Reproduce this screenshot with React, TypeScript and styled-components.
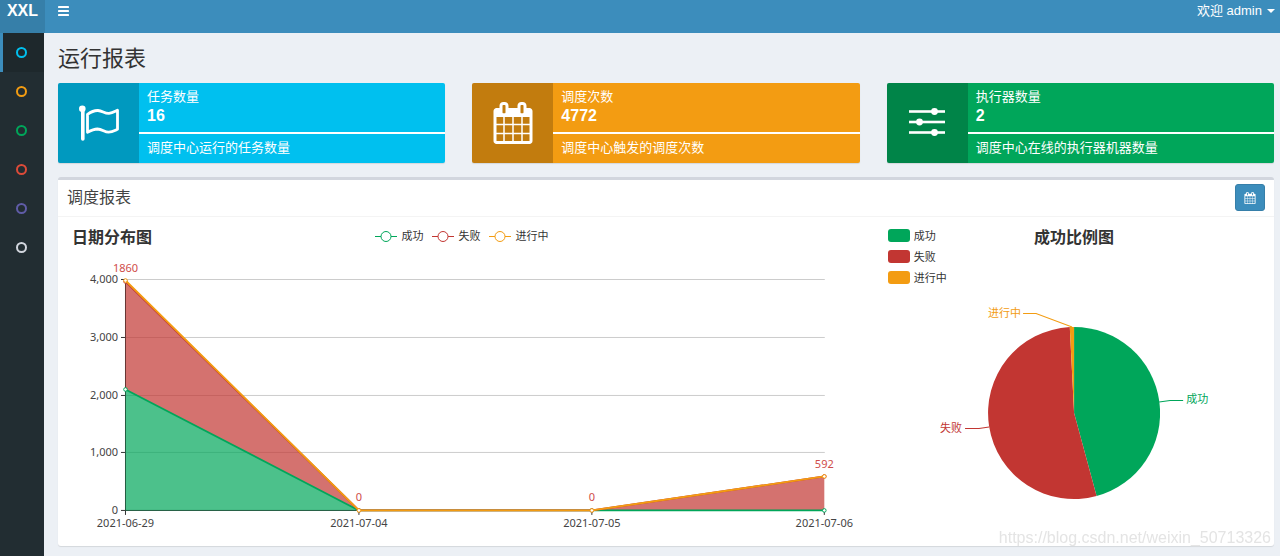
import React from "react";
import styled, { createGlobalStyle } from "styled-components";

const GREEN = "#00a65a";
const RED = "#c23632";
const ORANGE = "#f39c12";

const GlobalStyle = createGlobalStyle`
  *, *::before, *::after { box-sizing: border-box; }
  body {
    margin: 0;
    background: #ecf0f5;
    color: #333;
    font: 13px/18px "Liberation Sans", "Noto Sans CJK SC", sans-serif;
  }
  h1, h2, h3, p, ul { margin: 0; padding: 0; }
  button { font: inherit; cursor: pointer; }
`;

const Page = styled.div`
  display: flex;
  flex-direction: column;
  min-height: 100vh;
`;

const TopBar = styled.header`
  display: flex;
  height: 33px;
  background: #3c8dbc;
  color: #fff;
`;

const Logo = styled.a`
  width: 45px;
  background: #367fa9;
  color: #fff;
  font-size: 16px;
  font-weight: 700;
  line-height: 22px;
  text-align: center;
  text-decoration: none;
`;

const BarButton = styled.button`
  display: flex;
  align-items: center;
  height: 22px;
  padding: 0 13px;
  border: 0;
  background: none;
  color: #fff;
`;

const UserButton = styled(BarButton)`
  gap: 5px;
  margin-left: auto;
  padding: 0 5px;
`;

const Caret = styled.span`
  border: 4px solid transparent;
  border-top-color: #fff;
  border-bottom: 0;
`;

const Body = styled.div`
  display: flex;
  flex: 1;
`;

const Sidebar = styled.nav`
  flex: none;
  width: 44px;
  margin-right: 1px;
  background: #222d32;
`;

const MenuList = styled.ul`
  list-style: none;
`;

const MenuLink = styled.a<{ $active?: boolean }>`
  display: flex;
  align-items: center;
  height: 39px;
  padding-left: 13px;
  border-left: 3px solid ${(p) => (p.$active ? "#3c8dbc" : "transparent")};
  background: ${(p) => (p.$active ? "#1e282c" : "transparent")};
`;

const Ring = styled.span<{ $color: string }>`
  width: 11px;
  height: 11px;
  border: 2px solid ${(p) => p.$color};
  border-radius: 50%;
`;

const Main = styled.main`
  flex: 1;
  min-width: 0;
  padding: 13px 6px 9px 13px;
`;

const PageTitle = styled.h1`
  margin-bottom: 11px;
  font-size: 22px;
  font-weight: 400;
  line-height: 26px;
`;

const Cards = styled.div`
  display: grid;
  grid-template-columns: repeat(3, 1fr);
  gap: 27px;
  margin-bottom: 14px;
`;

const Card = styled.section<{ $color: string }>`
  display: flex;
  height: 80px;
  overflow: hidden;
  border-radius: 2px;
  background: ${(p) => p.$color};
  box-shadow: 0 1px 1px rgba(0, 0, 0, 0.1);
  color: #fff;
`;

const CardIcon = styled.div`
  display: flex;
  flex: none;
  align-items: center;
  justify-content: center;
  width: 81px;
  background: rgba(0, 0, 0, 0.2);
`;

const CardContent = styled.div`
  flex: 1;
  padding-top: 5px;
`;

const CardText = styled.p`
  padding: 0 8px;
  white-space: nowrap;
`;

const CardNumber = styled.p`
  padding: 0 8px;
  font-size: 16px;
  font-weight: 700;
  line-height: 20px;
`;

const CardRule = styled.div`
  height: 2px;
  margin: 6px 0 5px;
  background: #fff;
`;

const Box = styled.section`
  border-top: 3px solid #d2d6de;
  border-radius: 3px;
  background: #fff;
  box-shadow: 0 1px 1px rgba(0, 0, 0, 0.1);
`;

const BoxHeader = styled.div`
  display: flex;
  align-items: flex-start;
  justify-content: space-between;
  height: 37px;
  padding: 4px 9px 0;
  border-bottom: 1px solid #f4f4f4;
`;

const BoxTitle = styled.h2`
  color: #444;
  font-size: 16px;
  font-weight: 400;
  line-height: 27px;
`;

const DateButton = styled.button`
  display: flex;
  align-items: center;
  justify-content: center;
  width: 30px;
  height: 27px;
  padding: 0;
  border: 1px solid #367fa9;
  border-radius: 3px;
  background: #3c8dbc;
  color: #fff;
`;

const Charts = styled.div`
  display: grid;
  grid-template-columns: 31fr 15fr;
  gap: 26px;
  padding: 0 9px;
  font-family: "Noto Sans", "Noto Sans CJK SC", sans-serif;
`;

const ChartHead = styled.div<{ $height: number }>`
  display: grid;
  grid-template-columns: 1fr auto 1fr;
  align-items: start;
  height: ${(p) => p.$height}px;
  padding: 10px 5px 0;
`;

const ChartTitle = styled.h3`
  font-size: 16px;
  font-weight: 700;
  line-height: 20px;
`;

const Legend = styled.ul<{ $vertical?: boolean }>`
  display: flex;
  flex-direction: ${(p) => (p.$vertical ? "column" : "row")};
  gap: ${(p) => (p.$vertical ? "4px" : "9px")};
  list-style: none;
`;

const LegendItem = styled.li`
  display: flex;
  align-items: center;
  gap: 4px;
  font-size: 11px;
  line-height: 17px;
  white-space: nowrap;
`;

const Swatch = styled.span<{ $color: string }>`
  width: 22px;
  height: 13px;
  border-radius: 3px;
  background: ${(p) => p.$color};
`;

const Drawing = styled.svg`
  display: block;
  width: 100%;
  height: auto;
  font-size: 11px;
`;

const Watermark = styled.div`
  position: fixed;
  right: 9px;
  bottom: 9px;
  color: #e4e4e4;
  font-size: 16px;
`;

const BarsIcon = () => (
  <svg width="11" height="10" viewBox="0 0 11 10" fill="currentColor">
    <rect width="11" height="2" rx=".4" />
    <rect y="4" width="11" height="2" rx=".4" />
    <rect y="8" width="11" height="2" rx=".4" />
  </svg>
);

const CalendarIcon = ({ size }: { size: number }) => (
  <svg width={size} height={size} viewBox="0 0 1792 1792" fill="currentColor">
    <path d="M192 1664h288v-288h-288v288zm352 0h320v-288h-320v288zm-352-352h288v-320h-288v320zm352 0h320v-320h-320v320zm-352-384h288v-288h-288v288zm736 736h320v-288h-320v288zm-384-736h320v-288h-320v288zm768 736h288v-288h-288v288zm-384-352h320v-320h-320v320zm-352-864v-288q0-13-9.5-22.5t-22.5-9.5h-64q-13 0-22.5 9.5t-9.5 22.5v288q0 13 9.5 22.5t22.5 9.5h64q13 0 22.5-9.5t9.5-22.5zm736 864h288v-320h-288v320zm-384-384h320v-288h-320v288zm384 0h288v-288h-288v288zm32-480v-288q0-13-9.5-22.5t-22.5-9.5h-64q-13 0-22.5 9.5t-9.5 22.5v288q0 13 9.5 22.5t22.5 9.5h64q13 0 22.5-9.5t9.5-22.5zm384-64v1280q0 52-38 90t-90 38h-1408q-52 0-90-38t-38-90v-1280q0-52 38-90t90-38h128v-96q0-66 47-113t113-47h64q66 0 113 47t47 113v96h384v-96q0-66 47-113t113-47h64q66 0 113 47t47 113v96h128q52 0 90 38t38 90z" />
  </svg>
);

const FlagIcon = () => (
  <svg width="40" height="36" viewBox="0 0 40 36" fill="none" stroke="currentColor">
    <circle cx="3.3" cy="3.8" r="3.3" fill="currentColor" stroke="none" />
    <path d="M3.8 4v30" strokeWidth="3.600" strokeLinecap="round" />
    <path
      d="M8.500 9.300C12 6.800 15.500 5.300 19 5.500C23.500 5.800 25.500 8.600 30 8.400C33 8.200 35.500 6.700 38.500 5.300V24.300C35 25.900 32.500 27.300 29.500 27.200C25.500 27 23 24 18.500 24C15 24.100 11.500 25.700 8.500 27.300Z"
      strokeWidth="2.800"
      strokeLinejoin="round"
    />
  </svg>
);

const SlidersIcon = () => (
  <svg width="36" height="30" viewBox="0 0 36 30" fill="currentColor">
    {[
      [3.5, 25.5],
      [14, 10.5],
      [24.5, 25.5],
    ].map(([y, x]) => (
      <g key={y}>
        <rect y={y - 1.3} width="36" height="2.600" />
        <circle cx={x} cy={y} r="3.400" />
      </g>
    ))}
  </svg>
);

const LineMark = ({ color }: { color: string }) => (
  <svg width="22" height="12" viewBox="0 0 22 12" fill="none" stroke={color}>
    <path d="M0 6.500H22" />
    <circle cx="11" cy="6.500" r="5" fill="#fff" />
  </svg>
);

const menu = [
  { name: "运行报表", color: "#00c0ef" },
  { name: "任务管理", color: "#f39c12" },
  { name: "调度日志", color: "#00a65a" },
  { name: "执行器管理", color: "#dd4b39" },
  { name: "用户管理", color: "#605ca8" },
  { name: "使用教程", color: "#d2d6de" },
];

const cards = [
  { label: "任务数量", value: 16, note: "调度中心运行的任务数量", color: "#00c0ef", icon: <FlagIcon /> },
  { label: "调度次数", value: 4772, note: "调度中心触发的调度次数", color: "#f39c12", icon: <CalendarIcon size={42} /> },
  { label: "执行器数量", value: 2, note: "调度中心在线的执行器机器数量", color: "#00a65a", icon: <SlidersIcon /> },
];

const series = [
  { name: "成功", color: GREEN },
  { name: "失败", color: RED },
  { name: "进行中", color: ORANGE },
];

const X = [58.5, 292, 525, 757.5];
const days = ["2021-06-29", "2021-07-04", "2021-07-05", "2021-07-06"];
const ticks = [
  { y: 22.5, label: "4,000" },
  { y: 80.5, label: "3,000" },
  { y: 138.5, label: "2,000" },
  { y: 195.5, label: "1,000" },
  { y: 253.5, label: "0" },
];
const BASE = [253.5, 253.5, 253.5, 253.5];
const stacks = [
  { color: GREEN, top: [132.5, 253.5, 253.5, 253.5], floor: BASE },
  { color: RED, top: [24.5, 253.5, 253.5, 219.5], floor: [132.5, 253.5, 253.5, 253.5] },
  { color: ORANGE, top: [23.5, 253.5, 253.5, 219.5], floor: [24.5, 253.5, 253.5, 219.5] },
];
const redLabels = [
  { text: "1860", y: 15 },
  { text: "0", y: 244 },
  { text: "0", y: 244 },
  { text: "592", y: 211 },
];

const points = (ys: number[]) => ys.map((y, i) => `${X[i]},${y}`);

const TrendChart = () => (
  <Drawing viewBox="0 0 790 289" role="img" aria-label="日期分布图">
    {ticks.map((t) => (
      <g key={t.label}>
        <path d={`M58 ${t.y}H758`} stroke="#ccc" />
        <path d={`M54 ${t.y}H58`} stroke="#333" />
        <text x="51" y={t.y + 3.5} textAnchor="end" fill="#444">{t.label}</text>
      </g>
    ))}
    <path d="M58.5 22V254M58 253.500H758" stroke="#333" fill="none" />
    {days.map((d, i) => (
      <g key={d}>
        <path d={`M${X[i]} 254V258`} stroke="#333" />
        <text x={X[i]} y="270" textAnchor="middle" fill="#444">{d}</text>
      </g>
    ))}
    {stacks.map((s) => (
      <polygon
        key={s.color}
        points={[...points(s.top), ...points(s.floor).reverse()].join(" ")}
        fill={s.color}
        fillOpacity=".7"
      />
    ))}
    {stacks.map((s) => (
      <g key={s.color} stroke={s.color}>
        <polyline points={points(s.top).join(" ")} fill="none" strokeWidth="1.800" strokeLinejoin="bevel" />
        {s.top.map((y, i) => (
          <circle key={i} cx={X[i]} cy={y} r="1.800" fill="#fff" />
        ))}
      </g>
    ))}
    {redLabels.map((l, i) => (
      <text key={i} x={X[i]} y={l.y} textAnchor="middle" fill="#cf4d4a">{l.text}</text>
    ))}
  </Drawing>
);

const PieChart = () => (
  <Drawing viewBox="0 0 382 249" role="img" aria-label="成功比例图">
    <path d="M191 116V30A86 86 0 0 1 213.500 199Z" fill={GREEN} />
    <path d="M191 116L213.500 199A86 86 0 1 1 186.700 30.100Z" fill={RED} />
    <path d="M191 116L186.700 30.100A86 86 0 0 1 191 30Z" fill={ORANGE} />
    <g fill="none">
      <path d="M276 105L287 103.500H300" stroke={GREEN} />
      <path d="M106 130L96 131.500H82" stroke={RED} />
      <path d="M189 30L153 16.500H140" stroke={ORANGE} />
    </g>
    <text x="303" y="106" fill={GREEN}>成功</text>
    <text x="79" y="135" textAnchor="end" fill={RED}>失败</text>
    <text x="138" y="20" textAnchor="end" fill={ORANGE}>进行中</text>
  </Drawing>
);

export default function App() {
  return (
    <Page>
      <GlobalStyle />
      <TopBar>
        <Logo href="#">XXL</Logo>
        <BarButton aria-label="切换导航"><BarsIcon /></BarButton>
        <UserButton>欢迎 admin<Caret /></UserButton>
      </TopBar>
      <Body>
        <Sidebar>
          <MenuList>
            {menu.map((m, i) => (
              <li key={m.name}>
                <MenuLink href="#" aria-label={m.name} $active={i === 0}>
                  <Ring $color={m.color} />
                </MenuLink>
              </li>
            ))}
          </MenuList>
        </Sidebar>
        <Main>
          <PageTitle>运行报表</PageTitle>
          <Cards>
            {cards.map((c) => (
              <Card key={c.label} $color={c.color}>
                <CardIcon>{c.icon}</CardIcon>
                <CardContent>
                  <CardText>{c.label}</CardText>
                  <CardNumber>{c.value}</CardNumber>
                  <CardRule />
                  <CardText>{c.note}</CardText>
                </CardContent>
              </Card>
            ))}
          </Cards>
          <Box>
            <BoxHeader>
              <BoxTitle>调度报表</BoxTitle>
              <DateButton aria-label="选择日期"><CalendarIcon size={12} /></DateButton>
            </BoxHeader>
            <Charts>
              <div>
                <ChartHead $height={40}>
                  <ChartTitle>日期分布图</ChartTitle>
                  <Legend>
                    {series.map((s) => (
                      <LegendItem key={s.name}><LineMark color={s.color} />{s.name}</LegendItem>
                    ))}
                  </Legend>
                </ChartHead>
                <TrendChart />
              </div>
              <div>
                <ChartHead $height={80}>
                  <Legend $vertical>
                    {series.map((s) => (
                      <LegendItem key={s.name}><Swatch $color={s.color} />{s.name}</LegendItem>
                    ))}
                  </Legend>
                  <ChartTitle>成功比例图</ChartTitle>
                </ChartHead>
                <PieChart />
              </div>
            </Charts>
          </Box>
        </Main>
      </Body>
      <Watermark>https://blog.csdn.net/weixin_50713326</Watermark>
    </Page>
  );
}
